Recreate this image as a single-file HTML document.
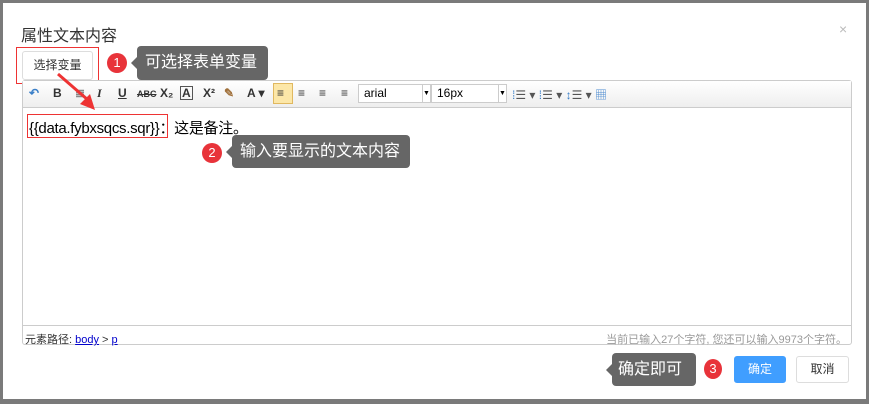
<!DOCTYPE html>
<html><head><meta charset="utf-8"><style>
*{box-sizing:border-box;margin:0;padding:0}
body{width:869px;height:404px;background:#7a7a7a;font-family:"Liberation Sans","Noto Sans CJK SC",sans-serif;position:relative;overflow:hidden}
.dlg{position:absolute;left:3px;top:3px;width:863px;height:396px;background:#fff}
.abs{position:absolute}
.tip{position:absolute;background:#666;color:#fff;font-size:16px;border-radius:4px;line-height:1;display:flex;align-items:center;padding-left:8px}
.tip:before{content:"";position:absolute;left:-6px;top:50%;margin-top:-6px;border:6px solid transparent;border-left:0;border-right-color:#666}
.badge{position:absolute;width:20px;height:20px;border-radius:50%;background:#e8333a;color:#fff;font-size:13px;text-align:center;line-height:20px}
.tb span{position:absolute;top:86px;font-size:12px;color:#333;font-weight:bold}
</style></head><body>
<div class="dlg"></div>
<div class="abs" style="left:21px;top:22px;font-size:16px;color:#333">属性文本内容</div>
<div class="abs" style="left:839px;top:21px;font-size:14px;color:#bbb">×</div>
<div class="abs" style="left:22px;top:51px;width:71px;height:29px;border:1px solid #ddd;border-radius:3px;font-size:12px;color:#333;text-align:center;line-height:27px">选择变量</div>
<div class="abs" style="left:16px;top:47px;width:83px;height:37px;border:1px solid #e33"></div>
<div class="badge" style="left:107px;top:53px">1</div>
<div class="tip" style="left:137px;top:46px;width:131px;height:34px">可选择表单变量</div>
<div class="abs" style="left:22px;top:80px;width:830px;height:265px;border:1px solid #ccc;border-radius:3px"></div>
<div class="abs" style="left:23px;top:81px;width:828px;height:27px;background:linear-gradient(#fff,#eee);border-bottom:1px solid #ccc"></div>
<div class="tb">
<span style="left:29px;color:#3a7fc8">↶</span><span style="left:53px">B</span><span style="left:75px;color:#888">≣</span><span style="left:97px;font-style:italic;font-family:'Liberation Serif'">I</span><span style="left:118px;text-decoration:underline">U</span><span style="left:137px;font-size:9px;top:89px;text-decoration:line-through">ABC</span><span style="left:160px">X₂</span><span style="left:180px;border:1px solid #555;padding:0 1px;line-height:12px">A</span><span style="left:203px">X²</span><span style="left:224px;color:#a0703a">✎</span><span style="left:247px">A ▾</span>
<span style="left:273px;top:83px;width:20px;height:21px;background:#fce7a8;border:1px solid #e0b860"></span>
<span style="left:277px">≡</span><span style="left:298px">≡</span><span style="left:319px">≡</span><span style="left:341px">≡</span>
</div>
<div class="abs" style="left:358px;top:84px;width:73px;height:19px;border:1px solid #ccc;background:#fff;font-size:12px;padding-left:5px;line-height:17px">arial<span style="position:absolute;right:-1px;top:-1px;width:9px;height:19px;border:1px solid #ccc;font-size:7px;text-align:center">▼</span></div>
<div class="abs" style="left:431px;top:84px;width:76px;height:19px;border:1px solid #ccc;background:#fff;font-size:12px;padding-left:5px;line-height:17px">16px<span style="position:absolute;right:-1px;top:-1px;width:9px;height:19px;border:1px solid #ccc;font-size:7px;text-align:center">▼</span></div>
<div class="abs" style="left:512px;top:86px;font-size:12px;color:#555"><span style="color:#3a7fc8">⁞</span>☰ ▾ <span style="color:#3a7fc8">⁞</span>☰ ▾ <span style="color:#3a7fc8">↕</span>☰ ▾ <span style="color:#4a8ad0">▦</span></div>
<div class="abs" style="left:29px;top:117px;font-size:15px;color:#000;letter-spacing:-0.3px">{{data.fybxsqcs.sqr}}：这是备注。</div>
<div class="abs" style="left:27px;top:114px;width:141px;height:24px;border:1px solid #e33"></div>
<svg class="abs" style="left:50px;top:68px" width="50" height="50"><line x1="8" y1="6" x2="38" y2="32" stroke="#e33" stroke-width="3"/><polygon points="45,42 30,36 40,26" fill="#e33"/></svg>
<div class="badge" style="left:202px;top:143px">2</div>
<div class="tip" style="left:232px;top:135px;width:178px;height:33px">输入要显示的文本内容</div>
<div class="abs" style="left:23px;top:325px;width:828px;height:1px;background:#ccc"></div>
<div class="abs" style="left:25px;top:331px;font-size:11px;color:#333">元素路径: <u style="color:#00c">body</u> &gt; <u style="color:#00c">p</u></div>
<div class="abs" style="right:22px;top:331px;font-size:11px;color:#999">当前已输入27个字符, 您还可以输入9973个字符。</div>
<div class="tip" style="left:612px;top:353px;width:84px;height:33px;padding-left:6px">确定即可</div>
<div class="badge" style="left:704px;top:359px;width:18px">3</div>
<div class="abs" style="left:734px;top:356px;width:52px;height:27px;background:#409eff;border-radius:3px;color:#fff;font-size:12px;text-align:center;line-height:27px">确定</div>
<div class="abs" style="left:796px;top:356px;width:53px;height:27px;border:1px solid #ddd;border-radius:3px;color:#333;font-size:12px;text-align:center;line-height:25px">取消</div>
</body></html>
